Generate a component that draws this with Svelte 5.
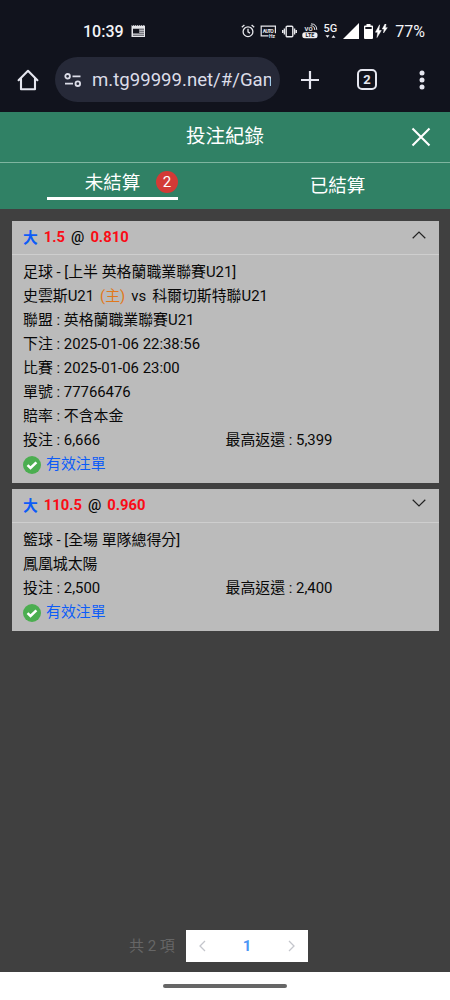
<script lang="ts">
  type Bet = {
    line: string;
    odds: string;
    open: boolean;
    event: string;
    home: string;
    away?: string;
    details: { label: string; value: string }[];
    stake: string;
    payout: string;
  };

  const bets: Bet[] = [
    {
      line: "1.5",
      odds: "0.810",
      open: true,
      event: "足球 - [上半 英格蘭職業聯賽U21]",
      home: "史雲斯U21",
      away: "科爾切斯特聯U21",
      details: [
        { label: "聯盟", value: "英格蘭職業聯賽U21" },
        { label: "下注", value: "2025-01-06 22:38:56" },
        { label: "比賽", value: "2025-01-06 23:00" },
        { label: "單號", value: "77766476" },
        { label: "賠率", value: "不含本金" }
      ],
      stake: "6,666",
      payout: "5,399"
    },
    {
      line: "110.5",
      odds: "0.960",
      open: false,
      event: "籃球 - [全場 單隊總得分]",
      home: "鳳凰城太陽",
      details: [],
      stake: "2,500",
      payout: "2,400"
    }
  ];

  let tab = $state("open");
</script>

<div class="screen">
  <div class="status">
    <span class="clock">10:39</span>
    <svg class="news" width="15" height="14" viewBox="0 0 15 14">
      <path d="M.5 1l1 1 1-1 1 1 1-1 1 1 1-1 1 1 1-1 1 1 1-1 1 1 1-1 1 1 .5-1v12H.5z" fill="#e6e6ea" />
      <path d="M2 4.5h11V12H2z" fill="#77787f" />
      <path d="M2 5h6v4H2z" fill="#14151e" />
      <path d="M8.5 6.5H13M8.5 8.5H13M2 10.5h11" stroke="#b5b5bb" />
    </svg>

    <div class="indicators">
      <svg width="14" height="14" viewBox="0 0 14 14" fill="none" stroke="#e8e8ec" stroke-width="1.3">
        <circle cx="7" cy="7.7" r="4.9" />
        <path d="M7 4.8v3.1l2 1.2M.8 3.2L3.4.9M13.2 3.2L10.6.9" />
      </svg>
      <svg width="17" height="15" viewBox="0 0 17 15">
        <path d="M8.5 11.8H1.2V2.2h14.2v7" fill="none" stroke="#e8e8ec" stroke-width="1.2" />
        <text x="2.8" y="8.6" font-size="5" font-weight="700" textLength="11" fill="#e8e8ec">AUTO</text>
        <text x="9" y="13.8" font-size="5" font-weight="700" fill="#e8e8ec">Hz</text>
      </svg>
      <svg width="15" height="13" viewBox="0 0 15 13" fill="none" stroke="#e8e8ec" stroke-width="1.4">
        <rect x="4.2" y="1.2" width="6.6" height="10.6" rx="1" />
        <path d="M2.4 3.5v6M12.6 3.5v6M.7 5v3M14.3 5v3" />
      </svg>
      <svg width="16" height="16" viewBox="0 0 16 16">
        <text x="2.6" y="8" font-size="6" font-weight="700" fill="#e8e8ec">VO</text>
        <path d="M8.5 2.8Q12.6 2.5 12.8 7M9 .9Q14.5.8 14.8 6.8" fill="none" stroke="#e8e8ec" />
        <rect x=".3" y="9.2" width="15.2" height="6" rx="2.5" fill="#f1f1f4" />
        <text x="3.6" y="14.4" font-size="5.4" font-weight="700" fill="#14151e">LTE</text>
      </svg>
      <svg width="15" height="18" viewBox="0 0 15 18" fill="#f1f1f4">
        <text x=".6" y="10.2" font-size="11" font-weight="500">5G</text>
        <path d="M2.5 13.3h4l-2 2.4zM8.5 15.7h4l-2-2.4z" />
      </svg>
      <svg width="16" height="16" viewBox="0 0 16 16"><path d="M0 16L16 0v16z" fill="#fff" /></svg>
      <svg width="9" height="15" viewBox="0 0 9 15" fill="#fff">
        <path d="M2.5 0h4v1.5H8q1 0 1 1V14q0 1-1 1H1q-1 0-1-1V2.5q0-1 1-1h1.5z" />
        <path d="M1.3 3h6.4v2H1.3z" fill="#14151e" />
      </svg>
      <svg class="bolts" width="13" height="14" viewBox="0 0 13 14" fill="#fff">
        <path d="M4.6.8L.4 8.2h2.3L2 13.5l4.3-7H3.9zM10 0L7.3 5h1.8l-.6 4 3.8-5.3h-1.9L11 0z" stroke="#fff" stroke-width=".5" />
      </svg>
      <span class="battery">77%</span>
    </div>
  </div>

  <div class="browser">
    <svg class="home" width="22" height="22" viewBox="0 0 22 22" fill="none" stroke="#e5e6ef" stroke-width="2.1" stroke-linejoin="round" stroke-linecap="round">
      <path d="M1.6 11.2L11 1.8l9.4 9.4M4 9v11.2h14V9" />
    </svg>
    <div class="address">
      <svg width="18" height="14" viewBox="0 0 18 14" fill="none" stroke="#dcdde8" stroke-width="1.8">
        <circle cx="3.6" cy="3.3" r="2.3" />
        <path d="M8.5 3.3h8M1 10.7h8" />
        <circle cx="13.8" cy="10.7" r="2.3" />
      </svg>
      <span class="url">m.tg99999.net/#/Gam</span>
    </div>
    <svg class="plus" width="20" height="20" viewBox="0 0 20 20" stroke="#e5e6ef" stroke-width="2.2">
      <path d="M1 10h18M10 1v18" />
    </svg>
    <div class="tab-count">2</div>
    <svg class="more" width="6" height="20" viewBox="0 0 6 20" fill="#e5e6ef">
      <circle cx="3" cy="3" r="2.5" />
      <circle cx="3" cy="10" r="2.5" />
      <circle cx="3" cy="17" r="2.5" />
    </svg>
  </div>

  <header class="title-bar">
    <h1>投注紀錄</h1>
    <button class="close" aria-label="關閉">
      <svg width="20" height="20" viewBox="0 0 20 20" stroke="#fff" stroke-width="2.1">
        <path d="M1.5 1.5l17 17M18.5 1.5l-17 17" />
      </svg>
    </button>
  </header>

  <nav class="tabs">
    <button class="tab" class:active={tab === "open"} onclick={() => (tab = "open")}>
      <span class="tab-label">未結算<span class="badge">2</span></span>
    </button>
    <button class="tab" class:active={tab === "settled"} onclick={() => (tab = "settled")}>
      <span class="tab-label">已結算</span>
    </button>
  </nav>

  <main>
    {#each bets as bet}
      <section class="card">
        <div class="card-header">
          <strong class="pick">大</strong>
          <strong class="red">{bet.line}</strong>
          <span class="at">@</span>
          <strong class="red">{bet.odds}</strong>
          <svg class="chevron" width="14" height="8" viewBox="0 0 14 8" fill="none" stroke="#222" stroke-width="1.2">
            <path d={bet.open ? "M.7 7.2L7 1l6.3 6.2" : "M.7.8L7 7 13.3.8"} />
          </svg>
        </div>
        <div class="card-body">
          <div class="row">{bet.event}</div>
          <div class="row">
            {bet.home}{#if bet.away}<span class="host">(主)</span>vs<span class="away">{bet.away}</span>{/if}
          </div>
          {#each bet.details as item}
            <div class="row">{item.label} : {item.value}</div>
          {/each}
          <div class="row amounts">
            <span>投注 : {bet.stake}</span>
            <span>最高返還 : {bet.payout}</span>
          </div>
          <div class="valid">
            <svg width="18" height="18" viewBox="0 0 18 18">
              <circle cx="9" cy="9" r="9" fill="#4bae50" />
              <path d="M4.5 9.2l3 2.8 5.9-5.7" fill="none" stroke="#fff" stroke-width="2.5" />
            </svg>
            <span>有效注單</span>
          </div>
        </div>
      </section>
    {/each}
  </main>

  <footer>
    <span class="total">共 {bets.length} 項</span>
    <div class="pager">
      <svg width="7" height="12" viewBox="0 0 7 12" fill="none" stroke="#c4c6cc" stroke-width="1.3"><path d="M6 1L1 6l5 5" /></svg>
      <span class="page">1</span>
      <svg width="7" height="12" viewBox="0 0 7 12" fill="none" stroke="#c4c6cc" stroke-width="1.3"><path d="M1 1l5 5-5 5" /></svg>
    </div>
  </footer>

  <div class="gesture"><div class="handle"></div></div>
</div>

<style>
  :global(body) {
    margin: 0;
  }

  .screen {
    display: flex;
    flex-direction: column;
    width: 450px;
    height: 1000px;
    overflow: hidden;
    background: #404040;
    font-family: Roboto, "Noto Sans CJK TC", sans-serif;
  }

  button {
    padding: 0;
    border: 0;
    background: none;
    color: inherit;
    font: inherit;
  }

  svg {
    display: block;
    flex: none;
  }

  .status {
    display: flex;
    align-items: center;
    height: 54px;
    padding: 8px 25px 0 83px;
    box-sizing: border-box;
    background: #11131d;
    color: #f4f4f7;
  }

  .clock {
    width: 48px;
    font-size: 16px;
    font-weight: 500;
  }

  .indicators {
    display: flex;
    align-items: center;
    gap: 5px;
    margin-left: auto;
  }

  .bolts {
    margin-left: -3px;
  }

  .battery {
    margin-left: 2px;
    font-size: 16px;
  }

  .browser {
    display: flex;
    align-items: center;
    height: 58px;
    padding: 0 25px 7px 17px;
    box-sizing: border-box;
    background: #11131d;
  }

  .address {
    display: flex;
    align-items: center;
    gap: 10px;
    width: 225px;
    height: 45px;
    margin-left: 16px;
    padding: 0 9px;
    box-sizing: border-box;
    border-radius: 23px;
    background: #262938;
  }

  .url {
    flex: 1;
    overflow: hidden;
    white-space: nowrap;
    color: #dcdde8;
    font-size: 18.6px;
  }

  .plus {
    margin-left: 20px;
  }

  .tab-count {
    width: 21px;
    height: 21px;
    margin: 0 42px 0 37px;
    box-sizing: border-box;
    border: 2px solid #e5e6ef;
    border-radius: 5px;
    color: #e5e6ef;
    font-size: 13px;
    font-weight: 700;
    line-height: 18px;
    text-align: center;
  }

  .title-bar {
    display: grid;
    grid-template-columns: 60px 1fr 60px;
    align-items: center;
    height: 51px;
    box-sizing: border-box;
    border-bottom: 1px solid #7fb5a0;
    background: #308165;
    color: #fff;
  }

  h1 {
    grid-column: 2;
    margin: 0;
    font-size: 19.5px;
    font-weight: 400;
    line-height: 48px;
    text-align: center;
  }

  .close {
    justify-self: center;
    margin-left: 1px;
  }

  .tabs {
    display: grid;
    grid-template-columns: 1fr 1fr;
    height: 46px;
    background: #308165;
    color: #fff;
    font-size: 18.5px;
  }

  .tab {
    display: flex;
    justify-content: center;
  }

  .tab-label {
    position: relative;
    box-sizing: border-box;
    width: 131px;
    height: 37px;
    line-height: 46px;
  }

  .active .tab-label {
    border-bottom: 3px solid #fff;
    line-height: 40px;
  }

  .badge {
    position: absolute;
    top: 8px;
    right: 0;
    width: 22px;
    height: 22px;
    border-radius: 50%;
    background: #d33a36;
    font-size: 15px;
    line-height: 22px;
  }

  main {
    display: flex;
    flex-direction: column;
    gap: 6px;
    padding: 12px 11px 0 12px;
  }

  .card {
    background: #bbb;
    color: #080808;
    font-size: 14.9px;
  }

  .card-header {
    display: flex;
    align-items: center;
    gap: 6px;
    height: 34px;
    padding: 0 13px 2px 11px;
    box-sizing: border-box;
    border-bottom: 1px solid #cecece;
    font-size: 14.8px;
  }

  .pick {
    color: #0c5cf8;
  }

  .red {
    color: #fa0c16;
  }

  .at {
    font-weight: 500;
  }

  .chevron {
    margin: -4px 0 0 auto;
  }

  .card-body {
    padding: 5px 11px 6px;
  }

  .row {
    height: 24px;
    line-height: 24px;
    white-space: nowrap;
  }

  .host {
    margin: 0 6px;
    color: #e0781c;
  }

  .away {
    margin-left: 6px;
  }

  .amounts {
    display: grid;
    grid-template-columns: 1fr 1fr;
  }

  .valid {
    display: flex;
    align-items: center;
    gap: 5px;
    height: 25px;
    color: #0c5cf8;
  }

  .valid span {
    line-height: 25px;
  }

  footer {
    display: flex;
    gap: 11px;
    margin-top: auto;
    padding: 0 0 10px 129px;
    line-height: 32px;
  }

  .total {
    width: 46px;
    color: #666;
    font-size: 15px;
    white-space: nowrap;
  }

  .pager {
    display: flex;
    align-items: center;
    justify-content: space-between;
    width: 122px;
    height: 32px;
    padding: 0 13px;
    box-sizing: border-box;
    background: #fff;
  }

  .page {
    color: #4c96f5;
    font-size: 15px;
    font-weight: 700;
  }

  .gesture {
    display: flex;
    justify-content: center;
    height: 28px;
    padding-top: 12px;
    box-sizing: border-box;
    background: #fff;
  }

  .handle {
    width: 124px;
    height: 4px;
    border-radius: 2px;
    background: #666;
  }
</style>
